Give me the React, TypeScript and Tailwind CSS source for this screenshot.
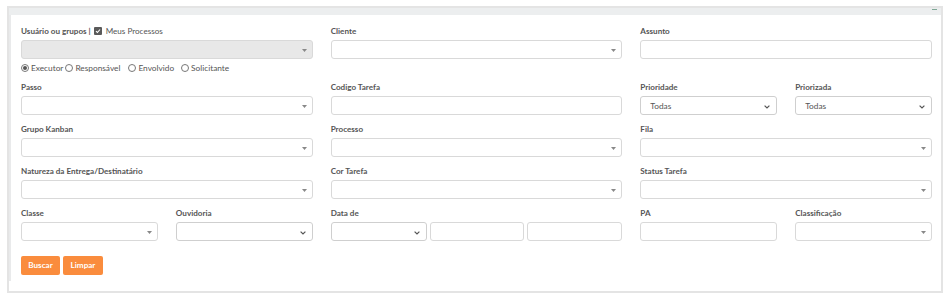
import React from "react";

const label = "block h-[12px] leading-[12px] text-[8.1px] font-bold text-[#555] mb-[3px] whitespace-nowrap";
const box = "h-[19px] w-full rounded-[3px] border border-[#d9d9d9] bg-white";

const Caret: React.FC = () => (
  <svg width="5" height="3" viewBox="0 0 5 3" className="absolute right-[5px] top-[8px]">
    <path d="M0 0h5L2.5 3z" fill="#888" />
  </svg>
);

const Chevron: React.FC = () => (
  <svg width="6" height="4" viewBox="0 0 6 4" className="absolute right-[6px] top-[8px]">
    <path d="M0.6 0.6L3 3 5.4 0.6" fill="none" stroke="#555" strokeWidth="1.2" />
  </svg>
);

const Select2: React.FC<{ disabled?: boolean }> = ({ disabled }) => (
  <div className={`relative h-[19px] w-full rounded-[3px] border border-[#d9d9d9] ${disabled ? "bg-[#e8e8e8]" : "bg-white"}`}>
    <Caret />
  </div>
);

const NativeSelect: React.FC<{ value?: string }> = ({ value }) => (
  <div className="relative h-[19px] w-full rounded-[3px] border border-[#cfcfcf] bg-white">
    {value && <span className="absolute left-[9px] top-[3px] text-[8.3px] leading-[12px] text-[#555]">{value}</span>}
    <Chevron />
  </div>
);

const Field: React.FC<{ title: string; children: React.ReactNode }> = ({ title, children }) => (
  <div className="mb-[8px]">
    <span className={label}>{title}</span>
    {children}
  </div>
);

const Radio: React.FC<{ text: string; checked?: boolean; className?: string }> = ({ text, checked, className }) => (
  <span className={`flex items-center gap-[2px] ${className ?? ""}`}>
    <span className="flex h-[8px] w-[8px] items-center justify-center rounded-full border border-[#777] bg-white">
      {checked && <span className="h-[4px] w-[4px] rounded-full bg-[#555]" />}
    </span>
    <span>{text}</span>
  </span>
);

const App: React.FC = () => {
  return (
    <div className="h-[301px] w-[950px] bg-white pl-[7px] pt-[6px]" style={{ fontFamily: "Lato, 'Noto Sans', sans-serif" }}>
      <div className="w-[936px] border-2 border-[#e4e4e4] bg-white">
        <div className="relative h-[7px] bg-[#eceeef]">
          <span className="absolute right-[4px] top-[1px] h-[1px] w-[5px] bg-[#7fa796]" />
        </div>
        <div className="border-l-[2px] border-[#e9eaeb] pl-[10px] pr-[9px] pt-[10px] pb-[6px]">
          <div className="grid grid-cols-3 gap-x-[18px]">
            {/* coluna 1 */}
            <div>
              <div className="mb-[3px] flex h-[12px] items-center text-[8.1px] leading-[12px] text-[#555]">
                <span className="font-bold">Usuário ou grupos |</span>
                <span className="ml-[3px] mr-[4px] flex h-[8px] w-[8px] items-center justify-center rounded-[1px] bg-[#5a5a5a]">
                  <svg width="6" height="6" viewBox="0 0 6 6">
                    <path d="M1 3.2L2.4 4.5 5 1.5" fill="none" stroke="#fff" strokeWidth="1.1" />
                  </svg>
                </span>
                <span>Meus Processos</span>
              </div>
              <Select2 disabled />
              <div className="mt-[3px] flex h-[12px] items-center text-[8.3px] leading-[12px] text-[#555]">
                <Radio text="Executor" checked />
                <Radio text="Responsável" className="ml-[2px]" />
                <Radio text="Envolvido" className="ml-[8px]" />
                <Radio text="Solicitante" className="ml-[7px]" />
              </div>
            </div>
            {/* coluna 2 */}
            <div>
              <Field title="Cliente">
                <Select2 />
              </Field>
            </div>
            {/* coluna 3 */}
            <div>
              <Field title="Assunto">
                <div className={box} />
              </Field>
            </div>
          </div>

          <div className="mt-[7px] grid grid-cols-3 gap-x-[18px]">
            <div>
              <Field title="Passo"><Select2 /></Field>
              <Field title="Grupo Kanban"><Select2 /></Field>
              <Field title="Natureza da Entrega/Destinatário"><Select2 /></Field>
              <div className="grid grid-cols-2 gap-x-[18px]">
                <Field title="Classe"><Select2 /></Field>
                <Field title="Ouvidoria"><NativeSelect /></Field>
              </div>
            </div>
            <div>
              <Field title="Codigo Tarefa"><div className={box} /></Field>
              <Field title="Processo"><Select2 /></Field>
              <Field title="Cor Tarefa"><Select2 /></Field>
              <Field title="Data de">
                <div className="flex gap-[3px]">
                  <div className="w-[96px] shrink-0"><NativeSelect /></div>
                  <div className={box} />
                  <div className={box} />
                </div>
              </Field>
            </div>
            <div>
              <div className="grid grid-cols-2 gap-x-[18px]">
                <Field title="Prioridade"><NativeSelect value="Todas" /></Field>
                <Field title="Priorizada"><NativeSelect value="Todas" /></Field>
              </div>
              <Field title="Fila"><Select2 /></Field>
              <Field title="Status Tarefa"><Select2 /></Field>
              <div className="grid grid-cols-2 gap-x-[18px]">
                <Field title="PA"><div className={box} /></Field>
                <Field title="Classificação"><Select2 /></Field>
              </div>
            </div>
          </div>

          <div className="mt-[7px] flex gap-[3px]">
            <button className="h-[19px] w-[39px] rounded-[2px] bg-[#fa8c3d] text-[8.1px] font-bold text-white">Buscar</button>
            <button className="h-[19px] w-[40px] rounded-[2px] bg-[#fa8c3d] text-[8.1px] font-bold text-white">Limpar</button>
          </div>
        </div>
        <div className="h-[10px]" />
      </div>
    </div>
  );
};

export default App;
